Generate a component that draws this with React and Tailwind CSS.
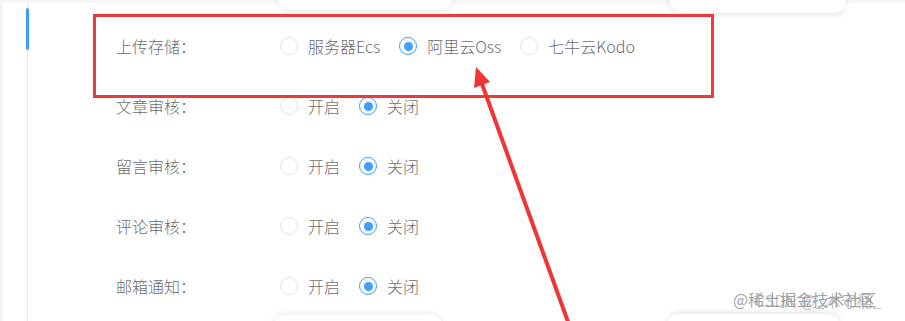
import React from 'react';

const rows = [
  { label: '上传存储：', options: ['服务器Ecs', '阿里云Oss', '七牛云Kodo'], value: 1 },
  { label: '文章审核：', options: ['开启', '关闭'], value: 1 },
  { label: '留言审核：', options: ['开启', '关闭'], value: 1 },
  { label: '评论审核：', options: ['开启', '关闭'], value: 1 },
  { label: '邮箱通知：', options: ['开启', '关闭'], value: 1 },
];

function Radio({ checked, children }) {
  return (
    <label className="mr-[19px] flex items-center">
      <span
        className={
          checked
            ? 'flex h-[18px] w-[18px] items-center justify-center rounded-full border border-[#409eff] bg-white'
            : 'flex h-[18px] w-[18px] items-center justify-center rounded-full border border-[#e2e4e8] bg-white'
        }
      >
        {checked && <span className="h-[9px] w-[9px] rounded-full bg-[#409eff]" />}
      </span>
      <span className="pl-[10px] text-[16px] font-light text-[#6b6d70]">{children}</span>
    </label>
  );
}

export default function App() {
  return (
    <div
      className="relative h-[321px] w-[905px] overflow-hidden bg-white"
      style={{ fontFamily: '"Microsoft YaHei", "Noto Sans CJK SC", sans-serif' }}
    >
      <div className="flex h-full">
        <div className="w-[3px] bg-[#f2f2f2]" />
        <div className="relative w-[25px] border-r border-[#e4e7ed]">
          <div className="absolute right-[-2px] top-[8px] h-[42px] w-[3px] rounded bg-[#409eff]" />
        </div>
        <div className="flex-1 pl-[88px] pt-[16px]">
          {rows.map((r) => (
            <div key={r.label} className="flex h-[60px] items-center">
              <div className="w-[164px] text-[16px] font-light text-[#6b6d70]">{r.label}</div>
              <div className="flex items-center">
                {r.options.map((o, i) => (
                  <Radio key={o} checked={i === r.value}>{o}</Radio>
                ))}
              </div>
            </div>
          ))}
        </div>
      </div>

      {/* faint floating cards at edges */}
      <div className="pointer-events-none absolute left-0 top-0 h-[3px] w-full bg-[#f5f5f5]" />
      <div className="pointer-events-none absolute left-[278px] top-[-20px] h-[30px] w-[175px] rounded-xl bg-white shadow-[0_2px_6px_rgba(0,0,0,0.08)]" />
      <div className="pointer-events-none absolute left-[670px] top-[-20px] h-[33px] w-[176px] rounded-xl bg-white shadow-[0_2px_6px_rgba(0,0,0,0.1)]" />
      <div className="pointer-events-none absolute left-[273px] top-[315px] h-[30px] w-[170px] rounded-xl bg-white shadow-[0_-2px_6px_rgba(0,0,0,0.08)]" />
      <div className="pointer-events-none absolute left-[667px] top-[314px] h-[30px] w-[173px] rounded-xl bg-white shadow-[0_-2px_6px_rgba(0,0,0,0.1)]" />

      {/* annotation box */}
      <div className="pointer-events-none absolute left-[93px] top-[14px] h-[84px] w-[621px] border-[3px] border-[#ec3b3b]" />

      {/* annotation arrow */}
      <svg className="pointer-events-none absolute left-0 top-0" width="905" height="321" viewBox="0 0 905 321">
        <line x1="571" y1="330" x2="482" y2="84" stroke="#ef3535" strokeWidth="4" />
        <polygon points="476,67 490,82 474,88" fill="#ef3535" />
      </svg>

      {/* watermark */}
      <div className="pointer-events-none absolute left-[733px] top-[287px] text-[16px] text-[#9a9a9a]">
        <span className="opacity-90">@稀土掘金技术社区</span>
        <span className="absolute left-[22px] top-[1px] whitespace-nowrap opacity-60">CSDN @_木守桶_</span>
      </div>
    </div>
  );
}
